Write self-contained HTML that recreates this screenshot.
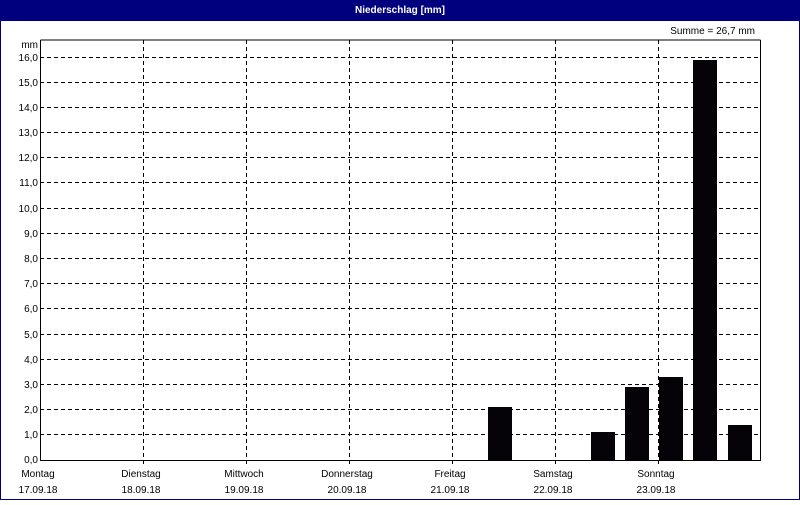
<!DOCTYPE html>
<html><head><style>
body{margin:0;width:800px;height:500px;overflow:hidden;background:#fff}
svg text{font-family:"Liberation Sans",sans-serif;font-size:10px;fill:#000}
</style></head><body>
<svg width="800" height="500" xmlns="http://www.w3.org/2000/svg" shape-rendering="crispEdges">
<rect x="0" y="0" width="800" height="500" fill="#00007f"/>
<rect x="1" y="21" width="798" height="478" fill="#fff"/>
<text x="400" y="13" text-anchor="middle" style="fill:#fff;font-weight:bold">Niederschlag [mm]</text>
<text x="755" y="34" text-anchor="end">Summe = 26,7 mm</text>
<text x="38" y="48" text-anchor="end">mm</text>
<g stroke="#000" stroke-width="1" stroke-dasharray="4,3" fill="none">
<path d="M40 57.5H760M40 82.5H760M40 107.5H760M40 132.5H760M40 157.5H760M40 182.5H760M40 208.5H760M40 233.5H760M40 258.5H760M40 283.5H760M40 308.5H760M40 334.5H760M40 359.5H760M40 384.5H760M40 409.5H760M40 434.5H760"/>
<path d="M143.5 40V466M246.5 40V466M349.5 40V466M452.5 40V466M555.5 40V466M658.5 40V466"/>
</g>
<path d="M40.5 40V460.5H760.5V40M40.5 40H760.5" stroke="#000" fill="none"/>
<g fill="#050208">
<rect x="488" y="407" width="24" height="53"/>
<rect x="591" y="432" width="24" height="28"/>
<rect x="625" y="387" width="24" height="73"/>
<rect x="659" y="377" width="24" height="83"/>
<rect x="693" y="60" width="24" height="400"/>
<rect x="728" y="425" width="24" height="35"/>
</g>
<g text-anchor="end">
<text x="38" y="61">16,0</text><text x="38" y="86">15,0</text><text x="38" y="111">14,0</text><text x="38" y="136">13,0</text><text x="38" y="161">12,0</text><text x="38" y="186">11,0</text><text x="38" y="212">10,0</text><text x="38" y="237">9,0</text><text x="38" y="262">8,0</text><text x="38" y="287">7,0</text><text x="38" y="312">6,0</text><text x="38" y="338">5,0</text><text x="38" y="363">4,0</text><text x="38" y="388">3,0</text><text x="38" y="413">2,0</text><text x="38" y="438">1,0</text><text x="38" y="463">0,0</text>
</g>
<g text-anchor="middle">
<text x="38" y="477">Montag</text><text x="38" y="493">17.09.18</text>
<text x="141" y="477">Dienstag</text><text x="141" y="493">18.09.18</text>
<text x="244" y="477">Mittwoch</text><text x="244" y="493">19.09.18</text>
<text x="347" y="477">Donnerstag</text><text x="347" y="493">20.09.18</text>
<text x="450" y="477">Freitag</text><text x="450" y="493">21.09.18</text>
<text x="553" y="477">Samstag</text><text x="553" y="493">22.09.18</text>
<text x="656" y="477">Sonntag</text><text x="656" y="493">23.09.18</text>
</g>
</svg>
</body></html>
